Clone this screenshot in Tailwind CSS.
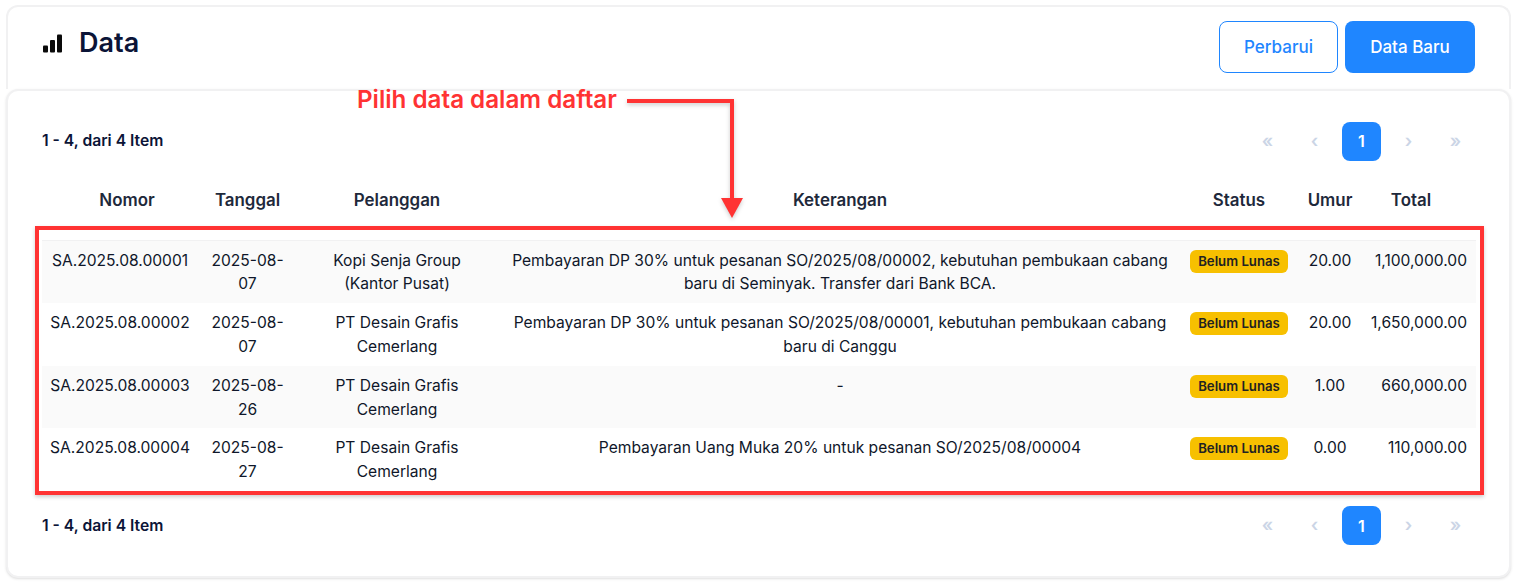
<!DOCTYPE html>
<html lang="en">

<head>
    <meta charset="UTF-8">
    <title>Data</title>
    <script src="https://cdn.jsdelivr.net/npm/@tailwindcss/browser@4"></script>
</head>

<body class="bg-white font-['Inter',sans-serif] text-[#0f172a] overflow-hidden">
    <div class="relative w-[1511px] h-[584px] pl-[6px] pt-[5px]">

        <!-- Header -->
        <div class="h-[84px] flex justify-between items-start px-[34px] pt-[14px] bg-white border-2 border-[#f1f1f2] rounded-t-xl border-b-0">
            <div class="flex items-start gap-[17px]">
                <svg class="w-[20px] h-[20px] mt-[12px]" viewBox="0 0 20 20" fill="#0a0a0a">
                    <rect x="1" y="12.5" width="5" height="7" rx="1" />
                    <rect x="8" y="7" width="5" height="12.5" rx="1" />
                    <rect x="15" y="1.5" width="5" height="18" rx="1" />
                </svg>
                <h1 class="text-[27px] leading-[42px] mt-[1px] font-semibold text-[#0b1437]">Data</h1>
            </div>
            <div class="flex gap-[7px]">
                <button class="w-[119px] h-[52px] pt-[2px] rounded-lg border border-[#1f86ff] text-[#1f86ff] text-[17px] font-medium">Perbarui</button>
                <button class="w-[130px] h-[52px] pt-[2px] rounded-lg bg-[#1f86ff] text-white text-[17px] font-medium">Data Baru</button>
            </div>
        </div>

        <!-- Table card -->
        <div class="h-[489px] border-2 border-[#f1f1f2] rounded-xl px-[34px] bg-white shadow-sm">
            <div class="h-[89px] flex justify-between items-center pt-[11px]">
                <span class="text-[15.7px] font-semibold text-[#0b1437]">1 - 4, dari 4 Item</span>
                <div class="flex items-center gap-[8px] text-[#cbd5e6] text-[18px] font-semibold">
                    <span class="w-[39px] -mt-[2px] text-center">«</span>
                    <span class="w-[39px] -mt-[2px] text-center">‹</span>
                    <span class="w-[39px] h-[39px] rounded-lg bg-[#1f86ff] text-white text-[16px] font-semibold flex items-center justify-center">1</span>
                    <span class="w-[39px] -mt-[2px] text-center">›</span>
                    <span class="w-[39px] -mt-[2px] text-center">»</span>
                </div>
            </div>

            <table class="w-[1434px] table-fixed border-collapse text-[15.6px] leading-[23.5px] text-center">
                <colgroup>
                    <col class="w-[163px]">
                    <col class="w-[85px]">
                    <col class="w-[214px]">
                    <col class="w-[672px]">
                    <col class="w-[126px]">
                    <col class="w-[56px]">
                    <col class="w-[118px]">
                </colgroup>
                <thead>
                    <tr class="h-[42px] text-[16.9px] text-[#1e293b]">
                        <th class="pl-[7px] font-semibold">Nomor</th>
                        <th class="font-semibold">Tanggal</th>
                        <th class="font-semibold">Pelanggan</th>
                        <th class="font-semibold">Keterangan</th>
                        <th class="font-semibold">Status</th>
                        <th class="font-semibold">Umur</th>
                        <th class="font-semibold pr-[12px]">Total</th>
                    </tr>
                    <tr class="h-[18px]"><th colspan="7"></th></tr>
                </thead>
                <tbody>
                    <tr class="bg-[#fafafa] border-t border-[#f1f1f2] align-top h-[63px]">
                        <td class="pt-[8px] pr-[7px]">SA.2025.08.00001</td>
                        <td class="pt-[8px]"><span class="block w-[80px] mx-auto">2025-08-07</span></td>
                        <td class="pt-[8px] px-[35px]">Kopi Senja Group (Kantor Pusat)</td>
                        <td class="pt-[8px] px-[4px]">Pembayaran DP 30% untuk pesanan SO/2025/08/00002, kebutuhan pembukaan cabang baru di Seminyak. Transfer dari Bank BCA.</td>
                        <td class="pt-[8px]"><span class="inline-block mt-[1px] w-[98px] h-[23px] rounded-md bg-[#f7c000] text-[13.2px] leading-[23px] font-semibold text-[#222]">Belum Lunas</span></td>
                        <td class="pt-[8px]">20.00</td>
                        <td class="pt-[8px] text-right pr-[9px]">1,100,000.00</td>
                    </tr>
                    <tr class="align-top h-[63px]">
                        <td class="pt-[8px] pr-[7px]">SA.2025.08.00002</td>
                        <td class="pt-[8px]"><span class="block w-[80px] mx-auto">2025-08-07</span></td>
                        <td class="pt-[8px] px-[35px]">PT Desain Grafis Cemerlang</td>
                        <td class="pt-[8px] px-[4px]">Pembayaran DP 30% untuk pesanan SO/2025/08/00001, kebutuhan pembukaan cabang baru di Canggu</td>
                        <td class="pt-[8px]"><span class="inline-block mt-[1px] w-[98px] h-[23px] rounded-md bg-[#f7c000] text-[13.2px] leading-[23px] font-semibold text-[#222]">Belum Lunas</span></td>
                        <td class="pt-[8px]">20.00</td>
                        <td class="pt-[8px] text-right pr-[9px]">1,650,000.00</td>
                    </tr>
                    <tr class="bg-[#fafafa] align-top h-[62px]">
                        <td class="pt-[8px] pr-[7px]">SA.2025.08.00003</td>
                        <td class="pt-[8px]"><span class="block w-[80px] mx-auto">2025-08-26</span></td>
                        <td class="pt-[8px] px-[35px]">PT Desain Grafis Cemerlang</td>
                        <td class="pt-[8px] px-[4px]">-</td>
                        <td class="pt-[8px]"><span class="inline-block mt-[1px] w-[98px] h-[23px] rounded-md bg-[#f7c000] text-[13.2px] leading-[23px] font-semibold text-[#222]">Belum Lunas</span></td>
                        <td class="pt-[8px]">1.00</td>
                        <td class="pt-[8px] text-right pr-[9px]">660,000.00</td>
                    </tr>
                    <tr class="align-top h-[62px]">
                        <td class="pt-[8px] pr-[7px]">SA.2025.08.00004</td>
                        <td class="pt-[8px]"><span class="block w-[80px] mx-auto">2025-08-27</span></td>
                        <td class="pt-[8px] px-[35px]">PT Desain Grafis Cemerlang</td>
                        <td class="pt-[8px] px-[4px]">Pembayaran Uang Muka 20% untuk pesanan SO/2025/08/00004</td>
                        <td class="pt-[8px]"><span class="inline-block mt-[1px] w-[98px] h-[23px] rounded-md bg-[#f7c000] text-[13.2px] leading-[23px] font-semibold text-[#222]">Belum Lunas</span></td>
                        <td class="pt-[8px]">0.00</td>
                        <td class="pt-[8px] text-right pr-[9px]">110,000.00</td>
                    </tr>
                </tbody>
            </table>

            <div class="h-[71px] flex justify-between items-center">
                <span class="text-[15.7px] font-semibold text-[#0b1437]">1 - 4, dari 4 Item</span>
                <div class="flex items-center gap-[8px] text-[#cbd5e6] text-[18px] font-semibold">
                    <span class="w-[39px] -mt-[2px] text-center">«</span>
                    <span class="w-[39px] -mt-[2px] text-center">‹</span>
                    <span class="w-[39px] h-[39px] rounded-lg bg-[#1f86ff] text-white text-[16px] font-semibold flex items-center justify-center">1</span>
                    <span class="w-[39px] -mt-[2px] text-center">›</span>
                    <span class="w-[39px] -mt-[2px] text-center">»</span>
                </div>
            </div>
        </div>

        <!-- Annotation -->
        <span class="absolute left-[357px] top-[85px] text-[24.2px] leading-[30px] font-semibold text-[#ff3333]">Pilih data dalam daftar</span>
        <svg class="absolute left-[620px] top-[95px] w-[130px] h-[125px] drop-shadow-[0_2px_2px_rgba(0,0,0,0.2)]" viewBox="0 0 130 125" fill="none">
            <path d="M7 6H112V105" stroke="#ff3333" stroke-width="4" />
            <path d="M101 103H123L112 123Z" fill="#ff3333" />
        </svg>
        <div class="absolute left-[35px] top-[226px] w-[1449px] h-[269px] border-[4px] border-[#ff3333] shadow-[0_2px_4px_rgba(0,0,0,0.2)]"></div>
    </div>
</body>

</html>
